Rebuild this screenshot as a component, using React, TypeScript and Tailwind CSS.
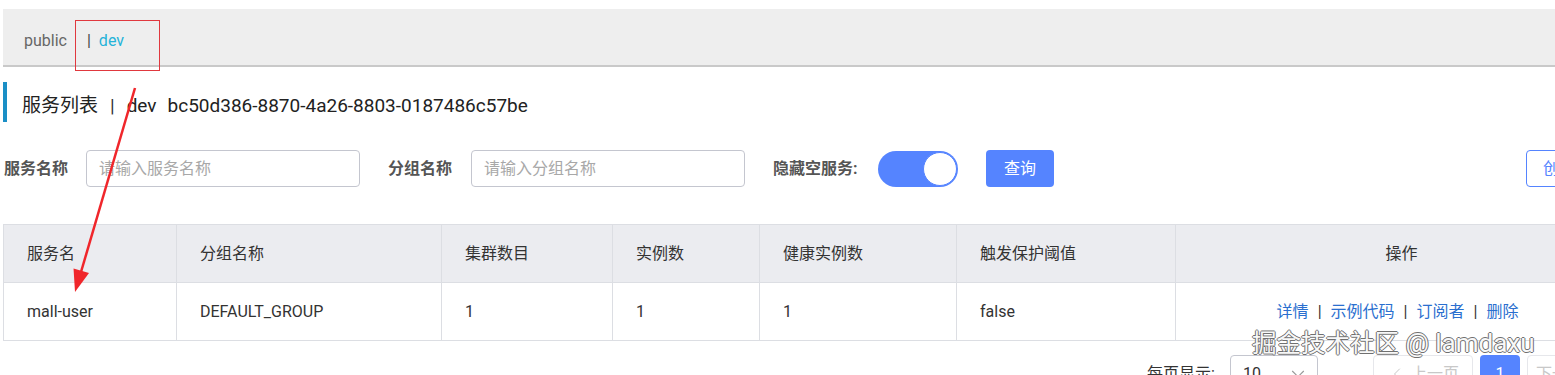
// Service list page - Nacos style console (dev namespace)
import { ChevronDown, ChevronLeft } from 'lucide-react';

const columns = [
  { title: '服务名', w: 'w-[173px]' },
  { title: '分组名称', w: 'w-[265px]' },
  { title: '集群数目', w: 'w-[171px]' },
  { title: '实例数', w: 'w-[147px]' },
  { title: '健康实例数', w: 'w-[197px]' },
  { title: '触发保护阈值', w: 'w-[219px]' },
];

const row = ['mall-user', 'DEFAULT_GROUP', '1', '1', '1', 'false'];

const actions = ['详情', '示例代码', '订阅者', '删除'];

export default function App() {
  return (
    <div className="relative w-[1555px] h-[375px] overflow-hidden bg-white pl-[3px] pt-[9px] font-[Roboto,'Noto_Sans_CJK_SC',sans-serif] text-[#333]">
      {/* Namespace tabs */}
      <div className="flex items-center h-[58px] pt-[7px] pl-[21px] bg-[#eeeeee] border-b-2 border-[#c9c9c9] text-[16px]">
        <span className="text-[#666]">public</span>
        <span className="ml-[20px] text-[#444]">|</span>
        <span className="ml-[8px] text-[#24b3d9]">dev</span>
      </div>

      {/* Page title */}
      <div className="flex items-center mt-[15px] h-[40px] pt-[8px] border-l-4 border-[#1b8fc6] pl-[15px] text-[19px] text-[#222]">
        <span>服务列表</span>
        <span className="mx-[12px] text-[#333]">|</span>
        <span>dev</span>
        <span className="ml-[11px]">bc50d386-8870-4a26-8803-0187486c57be</span>
      </div>

      {/* Search form */}
      <div className="flex items-center mt-[28px] h-[37px] text-[16px]">
        <span className="shrink-0 ml-[1px] w-[66px] font-bold text-[#555]">服务名称</span>
        <input
          className="shrink-0 ml-[16px] w-[274px] h-[37px] pl-[12px] border border-[#c4c6cf] rounded-[4px] outline-none placeholder:text-[#a8a8a8]"
          placeholder="请输入服务名称"
        />
        <span className="shrink-0 ml-[28px] w-[67px] font-bold text-[#555]">分组名称</span>
        <input
          className="shrink-0 ml-[16px] w-[274px] h-[37px] pl-[12px] border border-[#c4c6cf] rounded-[4px] outline-none placeholder:text-[#a8a8a8]"
          placeholder="请输入分组名称"
        />
        <span className="shrink-0 ml-[28px] w-[89px] font-bold text-[#555] whitespace-nowrap">隐藏空服务:</span>
        <div className="shrink-0 ml-[16px] flex items-center justify-end w-[80px] h-[36px] pr-[1px] rounded-full bg-[#5584ff]">
          <div className="w-[34px] h-[34px] rounded-full bg-white border border-[#5584ff]" />
        </div>
        <button className="shrink-0 ml-[28px] w-[68px] h-[37px] rounded-[4px] bg-[#5584ff] text-white">
          查询
        </button>
        <button className="shrink-0 ml-[472px] w-[120px] h-[37px] pl-[16px] text-left rounded-[4px] border border-[#5584ff] text-[#5584ff] whitespace-nowrap">
          创建服务
        </button>
      </div>

      {/* Table */}
      <div className="w-[1625px] mt-[37px] text-[16px]">
        <div className="flex border-t border-l border-[#dcdee3] bg-[#ebecf0] h-[59px]">
          {columns.map((c) => (
            <div
              key={c.title}
              className={`${c.w} shrink-0 flex items-center pl-[23px] border-r border-b border-[#dcdee3]`}
            >
              {c.title}
            </div>
          ))}
          <div className="w-[452px] shrink-0 flex items-center justify-center border-r border-b border-[#dcdee3]">
            操作
          </div>
        </div>
        <div className="flex border-l border-[#dcdee3] h-[58px]">
          {row.map((v, i) => (
            <div
              key={i}
              className={`${columns[i].w} shrink-0 flex items-center pl-[23px] border-r border-b border-[#dcdee3]`}
            >
              {v}
            </div>
          ))}
          <div className="w-[452px] shrink-0 flex items-center justify-center pr-[8px] border-r border-b border-[#dcdee3]">
            {actions.map((a, i) => (
              <span key={a} className="flex items-center">
                {i > 0 && <span className="mx-[9px] text-[#333]">|</span>}
                <span className="text-[#2a6fcf]">{a}</span>
              </span>
            ))}
          </div>
        </div>

        {/* Pagination */}
        <div className="flex items-center justify-end mt-[14px] h-[37px]">
          <span className="text-[#333]">每页显示:</span>
          <div className="ml-[15px] w-[88px] h-[37px] flex items-center justify-between pl-[12px] pr-[8px] border border-[#c4c6cf] rounded-[4px]">
            <span>10</span>
            <ChevronDown className="w-[22px] h-[22px] text-[#999]" strokeWidth={1.2} />
          </div>
          <div className="ml-[55px] w-[100px] h-[37px] flex items-center justify-center gap-[4px] border border-[#e6e7eb] rounded-[4px] text-[#c8c8c8]">
            <ChevronLeft className="w-[20px] h-[20px]" strokeWidth={1.2} />
            <span>上一页</span>
          </div>
          <div className="ml-[7px] w-[40px] h-[37px] flex items-center justify-center rounded-[4px] bg-[#5584ff] text-white">
            1
          </div>
          <div className="ml-[7px] w-[101px] h-[37px] flex items-center pl-[8px] border border-[#e6e7eb] rounded-[4px] text-[#c8c8c8]">
            下一页
          </div>
        </div>
      </div>

      {/* Annotation: red highlight box */}
      <div className="absolute left-[75px] top-[20px] w-[85px] h-[51px] border-[1.5px] border-[#e0383e] pointer-events-none" />

      {/* Annotation: red arrow */}
      <svg className="absolute left-0 top-0 pointer-events-none" width="1555" height="375" viewBox="0 0 1555 375">
        <line x1="135" y1="88" x2="81" y2="272" stroke="#f0262b" strokeWidth="2.5" />
        <polygon points="75,292 89,273 73.5,268.6" fill="#f0262b" />
      </svg>

      {/* Watermark */}
      <div className="absolute left-[1252px] top-[330px] leading-none whitespace-nowrap text-[#f8f8f8] [text-shadow:1px_0_0_#707070,-1px_0_0_#707070,0_1px_0_#707070,0_-1px_0_#707070] pointer-events-none">
        <span className="text-[24.5px]">掘金技术社区</span>
        <span className="text-[26px]"> @ lamdaxu</span>
      </div>
    </div>
  );
}
